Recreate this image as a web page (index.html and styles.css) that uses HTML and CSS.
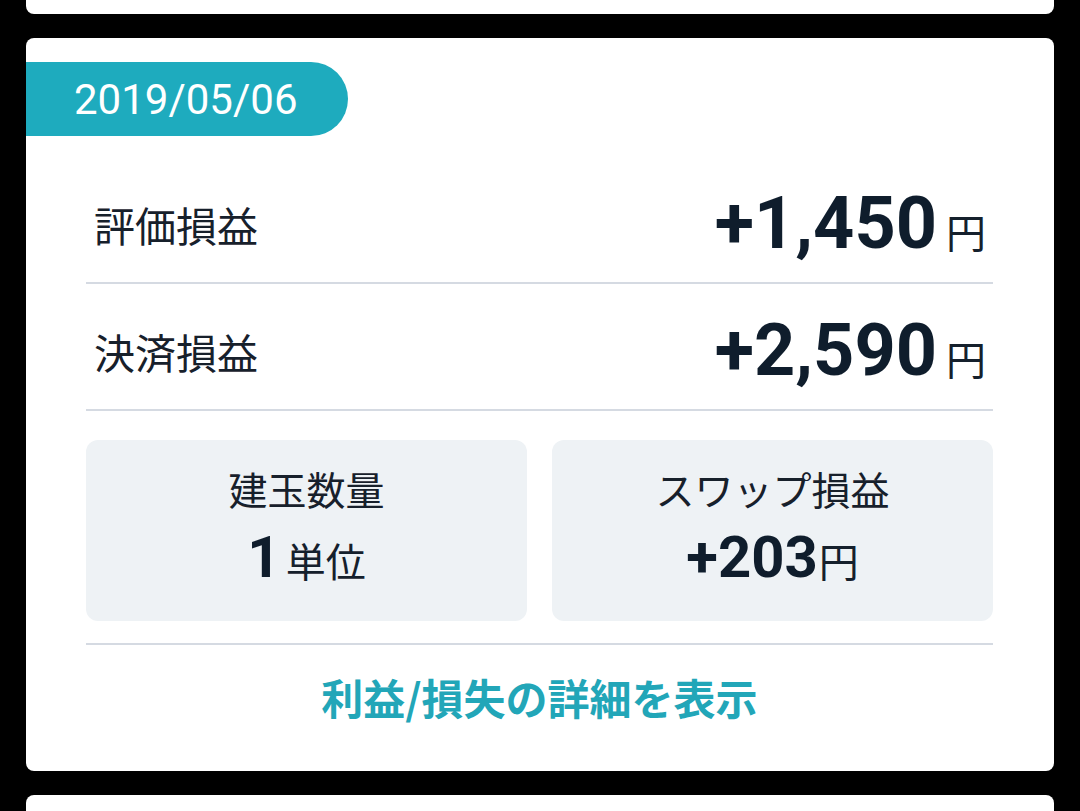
FILE: index.html
```html
<!DOCTYPE html>
<html lang="ja">
<head>
<meta charset="utf-8">
<link rel="stylesheet" href="styles.css">
</head>
<body>
<div class="page">
  <div class="card card-prev"></div>
  <div class="card card-main">
    <div class="date-pill">2019/05/06</div>
    <div class="content">
      <div class="row">
        <span class="label">評価損益</span>
        <span class="value"><b class="num">+1,450</b><span class="yen">円</span></span>
      </div>
      <div class="row">
        <span class="label">決済損益</span>
        <span class="value"><b class="num">+2,590</b><span class="yen">円</span></span>
      </div>
      <div class="boxes">
        <div class="box">
          <div class="box-label">建玉数量</div>
          <div class="box-value"><b class="box-num">1</b><span class="unit">単位</span></div>
        </div>
        <div class="box">
          <div class="box-label">スワップ損益</div>
          <div class="box-value"><b class="box-num">+203</b><span class="unit tight">円</span></div>
        </div>
      </div>
      <div class="link-wrap">
        <a class="detail-link">利益/損失の詳細を表示</a>
      </div>
    </div>
  </div>
  <div class="card card-next"></div>
</div>
</body>
</html>
```

FILE: styles.css
```css
html, body {
  margin: 0;
  padding: 0;
  background: #000;
}
body {
  font-family: Roboto, "Noto Sans CJK JP", sans-serif;
  color: #15202c;
  width: 1080px;
  height: 811px;
  overflow: hidden;
}
.page {
  display: flex;
  flex-direction: column;
  gap: 24px;
  padding: 0 26px;
}
.card {
  background: #fff;
  border-radius: 8px;
}
.card-prev {
  height: 14px;
  border-radius: 0 0 8px 8px;
}
.card-next {
  height: 40px;
  border-radius: 8px 8px 0 0;
}
.card-main {
  height: 733px;
  box-sizing: border-box;
  padding-top: 24px;
  display: flex;
  flex-direction: column;
}
.date-pill {
  align-self: flex-start;
  box-sizing: border-box;
  width: 322px;
  height: 74px;
  padding-left: 48px;
  display: flex;
  align-items: center;
  background: #1eabbe;
  color: #fff;
  font-family: Roboto, sans-serif;
  font-size: 42px;
  border-radius: 0 37px 37px 0;
}
.content {
  padding: 21px 61px 0 60px;
  display: flex;
  flex-direction: column;
  flex: 1;
}
.row {
  box-sizing: border-box;
  height: 127px;
  padding: 8px 7px 0 8px;
  border-bottom: 2px solid #d5dae2;
  display: flex;
  align-items: center;
  justify-content: space-between;
}
.label {
  font-family: "Noto Sans CJK JP", sans-serif;
  font-size: 41px;
  color: #17202b;
}
.value {
  display: flex;
  align-items: baseline;
}
.num {
  font-family: Roboto, sans-serif;
  font-weight: 700;
  font-size: 72px;
  color: #0f1d2c;
}
.yen {
  font-family: "Noto Sans CJK JP", sans-serif;
  font-size: 40px;
  margin-left: 9px;
  color: #15202c;
}
.boxes {
  display: grid;
  grid-template-columns: 1fr 1fr;
  gap: 25px;
  padding: 29px 0 22px;
  border-bottom: 2px solid #d5dae2;
}
.box {
  height: 181px;
  background: #eef2f5;
  border-radius: 12px;
  display: flex;
  flex-direction: column;
  align-items: center;
  justify-content: center;
  gap: 11px;
  padding-bottom: 12px;
  box-sizing: border-box;
}
.box-label {
  font-family: "Noto Sans CJK JP", sans-serif;
  font-size: 39px;
  line-height: 56px;
  color: #17202b;
}
.box-value {
  display: flex;
  align-items: baseline;
  line-height: 60px;
}
.box-num {
  font-family: Roboto, sans-serif;
  font-weight: 700;
  font-size: 58px;
  color: #0f1d2c;
}
.unit {
  font-family: "Noto Sans CJK JP", sans-serif;
  font-size: 40px;
  margin-left: 5px;
  color: #15202c;
}
.unit.tight {
  margin-left: 1px;
}
.link-wrap {
  flex: 1;
  display: flex;
  align-items: center;
  justify-content: center;
  padding-bottom: 24px;
}
.detail-link {
  font-family: "Noto Sans CJK JP", sans-serif;
  font-weight: 700;
  font-size: 42px;
  color: #22a6b8;
}
```
